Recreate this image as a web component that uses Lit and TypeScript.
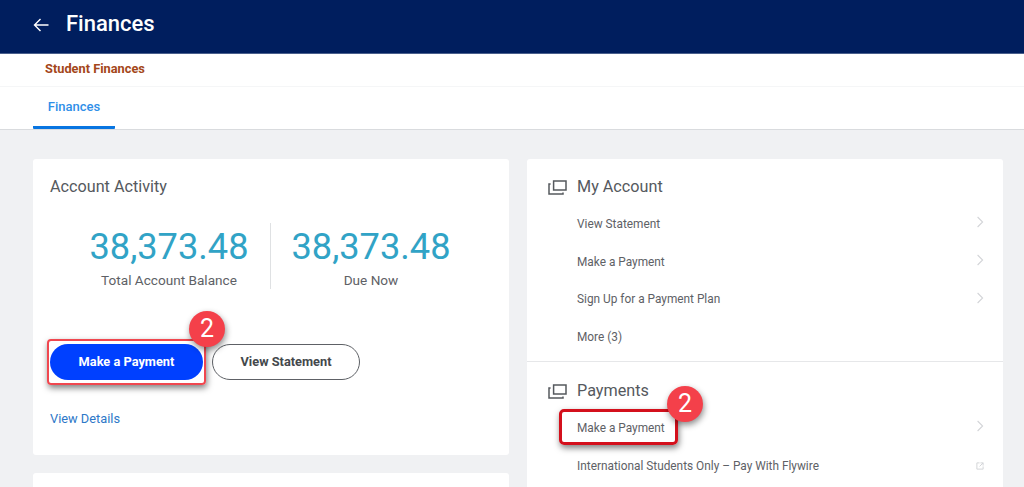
import { LitElement, html, css } from "lit";
import { customElement } from "lit/decorators.js";

const chevron = html`<svg class="chev" viewBox="0 0 8 12" width="8" height="12"><path d="M1.6 1 L6.6 6 L1.6 11" fill="none" stroke="#d3d5d8" stroke-width="1.1"/></svg>`;
const ext = html`<svg class="ext" viewBox="0 0 9 9" width="8" height="8"><path d="M4 1 H1 V8 H8 V5 M5 1 H8 V4 M8 1 L4 5" fill="none" stroke="#d3d5d8" stroke-width="1.1"/></svg>`;
const stack = html`<svg class="stack" viewBox="0 0 19 15" width="19" height="15"><path d="M5.6 1 H18 V10 H5.6 Z" fill="none" stroke="#55595e" stroke-width="1.5"/><path d="M2.6 4 H1 V14 H15 V12.4" fill="none" stroke="#55595e" stroke-width="1.5"/></svg>`;

@customElement("app-root")
export class AppRoot extends LitElement {
  static styles = css`
    :host { display: block; width: 1024px; height: 487px; overflow: hidden; background: #f0f1f3; font-family: Roboto, "Liberation Sans", sans-serif; color: #55595e; }
    .top { background: #001e5e; display: flex; align-items: center; padding: 0 0 6px 33px; gap: 17px; border-bottom: 1px solid #4a5f8c; height: 47px; }
    .top h1 { margin: 0; font-size: 22px; font-weight: 500; color: #fff; line-height: 24px; }
    .back { display: block; position: relative; top: 1px; }
    .crumb { height: 28px; background: #fff; display: flex; align-items: center; padding: 0 0 4px 45px; font-size: 12.8px; font-weight: 700; color: #a4471a; border-bottom: 1px solid #f5f6f7; }
    .tabs { height: 42px; background: #fff; border-bottom: 1px solid #d9dbde; padding-left: 33px; display: flex; }
    .tab { width: 82px; height: 42px; box-sizing: border-box; border-bottom: 3px solid #0875e1; border-radius: 0 0 1px 1px; text-align: center; font-size: 13px; font-weight: 500; color: #2f8fe8; padding-top: 12px; line-height: 16px; }
    .main { display: grid; grid-template-columns: 476px 476px; column-gap: 18px; padding: 29px 0 0 33px; }
    .col { display: flex; flex-direction: column; gap: 18px; }
    .card { background: #fff; border-radius: 3px; position: relative; }
    .activity { height: 296px; box-sizing: border-box; padding: 18px 17px 0; }
    .stub { height: 60px; }
    .title { font-size: 16.2px; line-height: 20px; color: #55595e; }
    .stats { display: flex; justify-content: center; margin: 26px 2px 0 0; height: 66px; }
    .stat { width: 201px; text-align: center; }
    .stat + .stat { border-left: 1px solid #dfe1e3; }
    .num { font-size: 36.2px; line-height: 44px; color: #31a3c6; margin-top: 2px; }
    .lbl { font-size: 13.6px; line-height: 18px; margin-top: 2px; color: #5e6166; }
    .btns { display: flex; gap: 9px; margin-top: 55px; }
    .btn { height: 36px; border-radius: 18px; box-sizing: border-box; font-size: 12.8px; font-weight: 700; display: flex; align-items: center; justify-content: center; padding-bottom: 2px; }
    .primary { width: 153px; background: #0040ff; color: #fff; }
    .secondary { width: 148px; background: #fff; border: 1px solid #5e6166; color: #44484c; }
    .details { margin-top: 31px; font-size: 12.8px; line-height: 16px; color: #2d78c8; }
    .mark { position: absolute; box-sizing: border-box; border-radius: 4px; box-shadow: 1px 3px 6px rgba(0,0,0,.5); pointer-events: none; }
    .mark-a { left: 14px; top: 180px; width: 159px; height: 46px; border: 2.5px solid #f0474f; }
    .mark-b { left: 32px; top: 47px; width: 119px; height: 36px; border: 3px solid #d4101c; border-radius: 5px; }
    .badge { position: absolute; width: 36px; height: 36px; border-radius: 50%; background: #f4404a; color: #fff; font-size: 25px; line-height: 36px; text-align: center; box-shadow: 1px 3px 6px rgba(0,0,0,.45); }
    .badge-a { left: 156px; top: 152px; }
    .badge-b { left: 140px; top: 24px; }
    .sec-h { display: flex; align-items: center; padding: 18px 0 0 21px; height: 20px; gap: 10px; font-size: 16.2px; line-height: 20px; }
    .rows { margin-top: 8px; padding: 0 19px 0 50px; }
    .row { height: 37.7px; display: flex; align-items: center; justify-content: space-between; font-size: 11.85px; color: #5e6166; }
    .sec { position: relative; }
    .account { height: 202px; border-bottom: 1px solid #e6e7e9; }
    .chev { margin-bottom: 3px; }
    .payments .sec-h { padding-top: 19px; }
  `;

  render() {
    return html`
      <header class="top">
        <svg class="back" viewBox="0 0 16 14" width="16" height="14"><path d="M15.5 7 H1.5 M7.5 1 L1.5 7 L7.5 13" fill="none" stroke="#fff" stroke-width="1.4"/></svg>
        <h1>Finances</h1>
      </header>
      <div class="crumb">Student Finances</div>
      <nav class="tabs"><div class="tab">Finances</div></nav>
      <main class="main">
        <div class="col">
          <section class="card activity">
            <div class="title">Account Activity</div>
            <div class="stats">
              <div class="stat"><div class="num">38,373.48</div><div class="lbl">Total Account Balance</div></div>
              <div class="stat"><div class="num">38,373.48</div><div class="lbl">Due Now</div></div>
            </div>
            <div class="btns">
              <div class="btn primary">Make a Payment</div>
              <div class="btn secondary">View Statement</div>
            </div>
            <div class="details">View Details</div>
            <div class="mark mark-a"></div>
            <div class="badge badge-a">2</div>
          </section>
          <section class="card stub"></section>
        </div>
        <section class="card">
          <div class="sec account">
            <div class="sec-h">${stack}<span>My Account</span></div>
            <div class="rows">
              <div class="row"><span>View Statement</span>${chevron}</div>
              <div class="row"><span>Make a Payment</span>${chevron}</div>
              <div class="row"><span>Sign Up for a Payment Plan</span>${chevron}</div>
              <div class="row"><span>More (3)</span></div>
            </div>
          </div>
          <div class="sec payments">
            <div class="sec-h">${stack}<span>Payments</span></div>
            <div class="rows">
              <div class="row"><span>Make a Payment</span>${chevron}</div>
              <div class="row"><span>International Students Only – Pay With Flywire</span>${ext}</div>
            </div>
            <div class="mark mark-b"></div>
            <div class="badge badge-b">2</div>
          </div>
        </section>
      </main>
    `;
  }
}
